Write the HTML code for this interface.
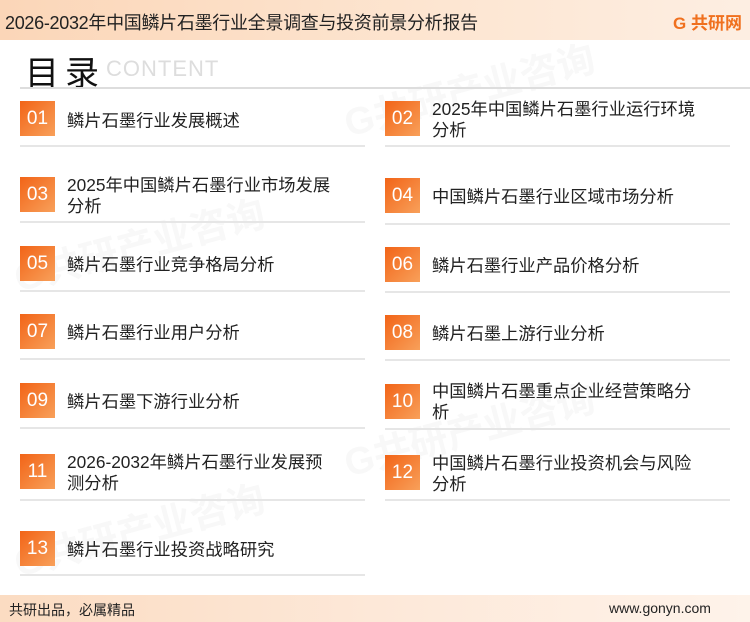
<!DOCTYPE html>
<html><head><meta charset="utf-8"><style>
*{margin:0;padding:0;box-sizing:border-box}
body{width:750px;height:622px;position:relative;overflow:hidden;background:#fff;font-family:"Liberation Sans","Noto Sans CJK SC",sans-serif;color:#222}
.hdr{position:absolute;left:0;top:0;width:750px;height:40px;background:linear-gradient(90deg,#fbd6b8,#fde6d2 60%,#fdeee2)}
.hdr .t{position:absolute;left:5px;top:9px;font-size:18px;color:#222;letter-spacing:-0.3px}
.logo{position:absolute;right:8px;top:9px;font-size:17px;font-weight:bold;color:#f0701e}
.ml{position:absolute;left:25px;top:46px;font-size:34px;color:#111;letter-spacing:6px}
.ct{position:absolute;left:106px;top:56px;font-size:22px;color:#ddd;letter-spacing:1px}
.hl{position:absolute;left:20px;top:87px;width:730px;height:2px;background:#ddd}
.box{position:absolute;width:35px;height:35px;background:linear-gradient(135deg,#f26417,#f8a05a);color:#fff;font-size:19px;text-align:center;line-height:35px}
.tx{position:absolute;font-size:17.3px;line-height:21px;width:272px;transform:translateY(-50%)}
.sep{position:absolute;height:2px;background:#e6e6e6;width:345px}
.ftr{position:absolute;left:0;top:595px;width:750px;height:27px;background:linear-gradient(90deg,#fbdcc2,#fde8d8 50%,#fef3ea)}
.ftr span{position:absolute;top:5px;font-size:14px;color:#222}
.wm{position:absolute;color:#f8f8f8;font-size:38px;font-weight:bold;transform:rotate(-15deg);white-space:nowrap}
</style></head><body>
<div class="wm" style="left:10px;top:215px">G共研产业咨询</div>
<div class="wm" style="left:340px;top:60px">G共研产业咨询</div>
<div class="wm" style="left:340px;top:400px">G共研产业咨询</div>
<div class="wm" style="left:10px;top:500px">G共研产业咨询</div>
<div class="hdr"><div class="t">2026-2032年中国鳞片石墨行业全景调查与投资前景分析报告</div><div class="logo">G 共研网</div></div>
<div class="ml">目录</div><div class="ct">CONTENT</div>
<div class="hl"></div>

<div class="box" style="left:20px;top:101px">01</div><div class="tx" style="left:67px;top:121px">鳞片石墨行业发展概述</div>
<div class="box" style="left:385px;top:101px">02</div><div class="tx" style="left:432px;top:120px">2025年中国鳞片石墨行业运行环境分析</div>
<div class="sep" style="left:20px;top:145px"></div><div class="sep" style="left:385px;top:145px"></div>

<div class="box" style="left:20px;top:177px">03</div><div class="tx" style="left:67px;top:196px">2025年中国鳞片石墨行业市场发展分析</div>
<div class="box" style="left:385px;top:178px">04</div><div class="tx" style="left:432px;top:197px">中国鳞片石墨行业区域市场分析</div>
<div class="sep" style="left:20px;top:221px"></div><div class="sep" style="left:385px;top:223px"></div>

<div class="box" style="left:20px;top:246px">05</div><div class="tx" style="left:67px;top:265px">鳞片石墨行业竞争格局分析</div>
<div class="box" style="left:385px;top:247px">06</div><div class="tx" style="left:432px;top:266px">鳞片石墨行业产品价格分析</div>
<div class="sep" style="left:20px;top:290px"></div><div class="sep" style="left:385px;top:291px"></div>

<div class="box" style="left:20px;top:314px">07</div><div class="tx" style="left:67px;top:333px">鳞片石墨行业用户分析</div>
<div class="box" style="left:385px;top:315px">08</div><div class="tx" style="left:432px;top:334px">鳞片石墨上游行业分析</div>
<div class="sep" style="left:20px;top:358px"></div><div class="sep" style="left:385px;top:359px"></div>

<div class="box" style="left:20px;top:383px">09</div><div class="tx" style="left:67px;top:402px">鳞片石墨下游行业分析</div>
<div class="box" style="left:385px;top:384px">10</div><div class="tx" style="left:432px;top:402px">中国鳞片石墨重点企业经营策略分析</div>
<div class="sep" style="left:20px;top:427px"></div><div class="sep" style="left:385px;top:428px"></div>

<div class="box" style="left:20px;top:454px">11</div><div class="tx" style="left:67px;top:473px">2026-2032年鳞片石墨行业发展预测分析</div>
<div class="box" style="left:385px;top:455px">12</div><div class="tx" style="left:432px;top:474px">中国鳞片石墨行业投资机会与风险分析</div>
<div class="sep" style="left:20px;top:499px"></div><div class="sep" style="left:385px;top:499px"></div>

<div class="box" style="left:20px;top:531px">13</div><div class="tx" style="left:67px;top:550px">鳞片石墨行业投资战略研究</div>
<div class="sep" style="left:20px;top:574px"></div>

<div class="ftr"><span style="left:9px">共研出品，必属精品</span><span style="left:609px">www.gonyn.com</span></div>
</body></html>
